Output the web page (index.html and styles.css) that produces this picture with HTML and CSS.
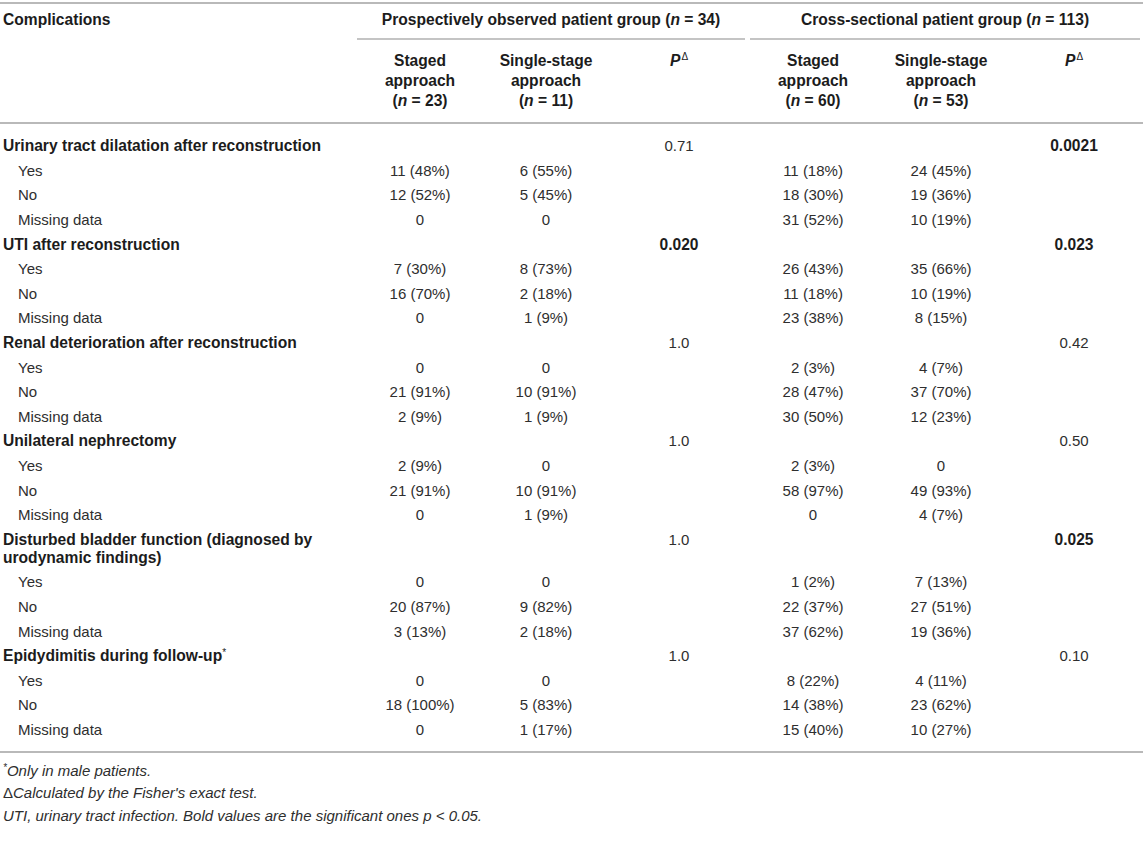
FILE: index.html
```html
<!DOCTYPE html>
<html lang="en">
<head>
<meta charset="utf-8">
<title>Complications table</title>
<link rel="stylesheet" href="styles.css">
</head>
<body>
<table class="tbl">
  <colgroup>
    <col class="w-lab">
    <col class="w-a">
    <col class="w-a">
    <col class="w-p1">
    <col class="w-b">
    <col class="w-b">
    <col class="w-p2">
  </colgroup>
  <thead>
    <tr class="hr1">
      <th class="lab" rowspan="2">Complications</th>
      <th class="grp" colspan="3"><div class="grp-in g1">Prospectively observed patient group (<i>n</i> = 34)</div></th>
      <th class="grp" colspan="3"><div class="grp-in g2">Cross-sectional patient group (<i>n</i> = 113)</div></th>
    </tr>
    <tr class="hr2">
      <th>Staged<br>approach<br>(<i>n</i> = 23)</th>
      <th>Single-stage<br>approach<br>(<i>n</i> = 11)</th>
      <th><i>P</i><sup class="delta">&#916;</sup></th>
      <th>Staged<br>approach<br>(<i>n</i> = 60)</th>
      <th>Single-stage<br>approach<br>(<i>n</i> = 53)</th>
      <th><i>P</i><sup class="delta">&#916;</sup></th>
    </tr>
  </thead>
  <tbody>
    <tr class="sec first"><td class="lab">Urinary tract dilatation after reconstruction</td><td></td><td></td><td>0.71</td><td></td><td></td><td class="b">0.0021</td></tr>
    <tr><td class="sub">Yes</td><td>11 (48%)</td><td>6 (55%)</td><td></td><td>11 (18%)</td><td>24 (45%)</td><td></td></tr>
    <tr><td class="sub">No</td><td>12 (52%)</td><td>5 (45%)</td><td></td><td>18 (30%)</td><td>19 (36%)</td><td></td></tr>
    <tr><td class="sub">Missing data</td><td>0</td><td>0</td><td></td><td>31 (52%)</td><td>10 (19%)</td><td></td></tr>

    <tr class="sec"><td class="lab">UTI after reconstruction</td><td></td><td></td><td class="b">0.020</td><td></td><td></td><td class="b">0.023</td></tr>
    <tr><td class="sub">Yes</td><td>7 (30%)</td><td>8 (73%)</td><td></td><td>26 (43%)</td><td>35 (66%)</td><td></td></tr>
    <tr><td class="sub">No</td><td>16 (70%)</td><td>2 (18%)</td><td></td><td>11 (18%)</td><td>10 (19%)</td><td></td></tr>
    <tr><td class="sub">Missing data</td><td>0</td><td>1 (9%)</td><td></td><td>23 (38%)</td><td>8 (15%)</td><td></td></tr>

    <tr class="sec"><td class="lab">Renal deterioration after reconstruction</td><td></td><td></td><td>1.0</td><td></td><td></td><td>0.42</td></tr>
    <tr><td class="sub">Yes</td><td>0</td><td>0</td><td></td><td>2 (3%)</td><td>4 (7%)</td><td></td></tr>
    <tr><td class="sub">No</td><td>21 (91%)</td><td>10 (91%)</td><td></td><td>28 (47%)</td><td>37 (70%)</td><td></td></tr>
    <tr><td class="sub">Missing data</td><td>2 (9%)</td><td>1 (9%)</td><td></td><td>30 (50%)</td><td>12 (23%)</td><td></td></tr>

    <tr class="sec"><td class="lab">Unilateral nephrectomy</td><td></td><td></td><td>1.0</td><td></td><td></td><td>0.50</td></tr>
    <tr><td class="sub">Yes</td><td>2 (9%)</td><td>0</td><td></td><td>2 (3%)</td><td>0</td><td></td></tr>
    <tr><td class="sub">No</td><td>21 (91%)</td><td>10 (91%)</td><td></td><td>58 (97%)</td><td>49 (93%)</td><td></td></tr>
    <tr><td class="sub">Missing data</td><td>0</td><td>1 (9%)</td><td></td><td>0</td><td>4 (7%)</td><td></td></tr>

    <tr class="sec"><td class="lab">Disturbed bladder function (diagnosed by urodynamic findings)</td><td></td><td></td><td>1.0</td><td></td><td></td><td class="b">0.025</td></tr>
    <tr><td class="sub">Yes</td><td>0</td><td>0</td><td></td><td>1 (2%)</td><td>7 (13%)</td><td></td></tr>
    <tr><td class="sub">No</td><td>20 (87%)</td><td>9 (82%)</td><td></td><td>22 (37%)</td><td>27 (51%)</td><td></td></tr>
    <tr><td class="sub">Missing data</td><td>3 (13%)</td><td>2 (18%)</td><td></td><td>37 (62%)</td><td>19 (36%)</td><td></td></tr>

    <tr class="sec"><td class="lab">Epidydimitis during follow-up<sup class="ast">*</sup></td><td></td><td></td><td>1.0</td><td></td><td></td><td>0.10</td></tr>
    <tr><td class="sub">Yes</td><td>0</td><td>0</td><td></td><td>8 (22%)</td><td>4 (11%)</td><td></td></tr>
    <tr><td class="sub">No</td><td>18 (100%)</td><td>5 (83%)</td><td></td><td>14 (38%)</td><td>23 (62%)</td><td></td></tr>
    <tr class="last"><td class="sub">Missing data</td><td>0</td><td>1 (17%)</td><td></td><td>15 (40%)</td><td>10 (27%)</td><td></td></tr>
  </tbody>
</table>
<div class="notes">
  <p><sup class="ast">*</sup>Only in male patients.</p>
  <p><span class="up">&#916;</span>Calculated by the Fisher's exact test.</p>
  <p>UTI, urinary tract infection. Bold values are the significant ones <span class="pl">p</span> &lt; 0.05.</p>
</div>
</body>
</html>
```

FILE: styles.css
```css
html, body {
  margin: 0;
  padding: 0;
  background: #ffffff;
}

body {
  font-family: "Liberation Sans", Arial, Helvetica, sans-serif;
  font-size: 15px;
  color: #2e2e2e;
}

.tbl {
  width: 1143px;
  table-layout: fixed;
  border-collapse: collapse;
  margin-top: 2px;
  border-top: 2px solid #b9b9b9;
  border-bottom: 2px solid #b9b9b9;
}

.w-lab { width: 357px; }
.w-a { width: 126px; }
.w-p1 { width: 140px; }
.w-b { width: 128px; }
.w-p2 { width: 138px; }

th, td {
  padding: 0;
  vertical-align: top;
  line-height: 18px;
}

thead th {
  font-weight: bold;
  font-size: 15.6px;
  color: #1c1c1c;
  text-align: center;
}

thead th.lab {
  text-align: left;
  padding: 7px 3px 0;
}

.hr1 th.grp {
  padding-top: 7px;
}

.grp-in {
  padding-bottom: 9px;
  border-bottom: 2px solid #c4c4c4;
}

.grp-in.g1 { margin-right: 4px; }
.grp-in.g2 { margin-left: 1px; margin-right: 3px; }

.hr2 {
  border-bottom: 2px solid #b9b9b9;
}

.hr2 th {
  line-height: 20px;
  padding: 11px 0 11px;
}

.delta {
  font-size: 10px;
  font-weight: normal;
  vertical-align: 6px;
  line-height: 0;
  margin-left: 1px;
}

tbody td {
  text-align: center;
  padding: 3.3px 0;
}

tbody td.lab {
  text-align: left;
  font-weight: bold;
  font-size: 15.6px;
  color: #1c1c1c;
  padding-left: 3px;
  padding-right: 10px;
}

tbody td.sub {
  text-align: left;
  padding-left: 18px;
}

tbody td.b {
  font-weight: bold;
  font-size: 15.6px;
  color: #1c1c1c;
}

tbody tr.first td {
  padding-top: 13.3px;
}

tbody tr.last td {
  padding-bottom: 12px;
}

.ast {
  font-size: 10px;
  font-weight: normal;
  vertical-align: 5px;
  line-height: 0;
}

.notes {
  padding: 7px 3px 0;
  font-style: italic;
  color: #2e2e2e;
}

.notes p {
  margin: 0;
  line-height: 22.5px;
}

.notes .up {
  font-style: normal;
}

.notes .pl {
  font-style: italic;
}
```
